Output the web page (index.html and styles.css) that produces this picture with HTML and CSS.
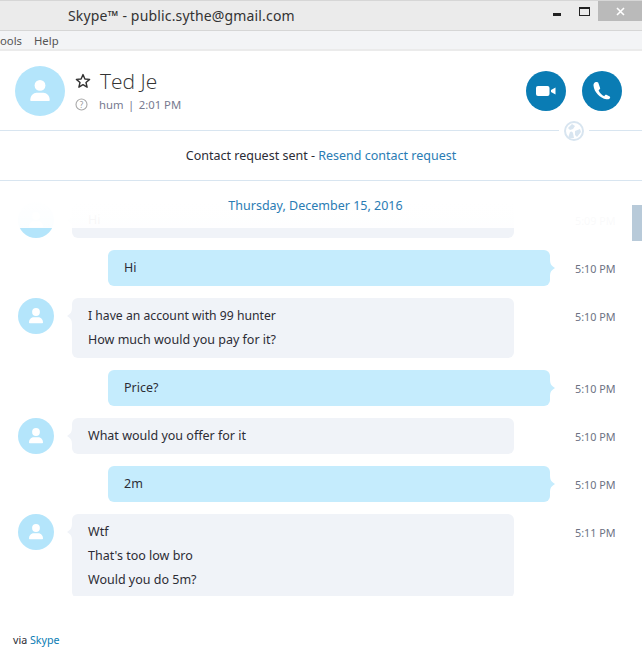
FILE: index.html
```html
<!DOCTYPE html>
<html lang="en">
<head>
<meta charset="utf-8">
<title>Skype</title>
<link rel="stylesheet" href="styles.css">
</head>
<body>
<div class="page">
  <header class="titlebar">
    <span class="title">Skype™ - public.sythe@gmail.com</span>
    <div class="winctl">
      <span class="min"></span>
      <span class="max"></span>
      <span class="close"><svg width="9" height="9" viewBox="0 0 9 9"><path d="M1 1l7 7M8 1l-7 7" stroke="#fff" stroke-width="1.6"/></svg></span>
    </div>
  </header>
  <nav class="menubar"><span class="tools">ools</span><span class="help">Help</span></nav>
  <section class="contact">
    <div class="avatar big"><svg viewBox="0 0 36 36"><use href="#person"/></svg></div>
    <div class="who">
      <div class="nameline">
        <svg class="star" width="16" height="16" viewBox="0 0 16 16"><path d="M8 1.6l1.9 4.4 4.7.4-3.6 3.1 1.1 4.7L8 11.7l-4.100 2.500 1.100-4.700-3.600-3.100 4.700-.4z" fill="none" stroke="#333" stroke-width="1.4" stroke-linejoin="round"/></svg>
        <span class="name">Ted Je</span>
      </div>
      <div class="status">
        <svg class="q" width="13" height="13" viewBox="0 0 13 13"><circle cx="6.5" cy="6.5" r="5.5" fill="none" stroke="#a9a9a9" stroke-width="1.1"/><text x="6.5" y="9.500" class="qmark">?</text></svg>
        <span>hum</span><span class="sep">|</span><span>2:01 PM</span>
      </div>
    </div>
    <div class="actions">
      <button class="call"><svg width="22" height="14" viewBox="0 0 22 14"><rect x="1" y="2" width="13.500" height="10" rx="2" fill="#fff"/><path d="M16 6l4.500-2.500v7L16 8z" fill="#fff"/></svg></button>
      <button class="call"><svg width="20" height="20" viewBox="0 0 20 20"><path d="M3.200 1.300c-1.100.7-1.800 1.700-1.700 3.200.3 3.500 2 6.600 4.300 8.900 2.400 2.500 5.200 4.200 8.600 4.900 1.900.3 3.200-.4 3.700-1.600.2-.6 0-1-.4-1.200l-3.300-1.700c-.5-.2-1-.1-1.300.3l-.8 1.100c-2.500-1-4.700-3.400-5.700-6l1.100-.9c.4-.3.600-.8.400-1.300L6.200 1.600c-.3-.7-2-.9-3-.3z" fill="#fff"/></svg></button>
    </div>
  </section>
  <section class="notice">
    <span class="globe"><svg width="20" height="20" viewBox="0 0 20 20"><circle cx="10" cy="10" r="9" fill="none" stroke="#d8e5f0" stroke-width="2"/><circle cx="10" cy="10" r="7" fill="#fff"/><path d="M4 7l4-4 3 2-2 3-3 1zM11 10l5-2 1 3-4 5-2-2zM6 11a2 2 0 0 1 3 1l1 5H4z" fill="#d8e5f0"/></svg></span>
    <span>Contact request sent - </span><a class="link">Resend contact request</a>
  </section>
  <main class="chat">
    <div class="fade"></div>
    <div class="date">Thursday, December 15, 2016</div>
    <div class="thumb"></div>
    <div class="row in">
      <div class="avatar"><svg viewBox="0 0 36 36"><use href="#person"/></svg></div>
      <div class="bubble"><p>Hi</p></div>
      <time>5:09 PM</time>
    </div>
    <div class="row out">
      <div class="bubble"><p>Hi</p></div>
      <time>5:10 PM</time>
    </div>
    <div class="row in">
      <div class="avatar"><svg viewBox="0 0 36 36"><use href="#person"/></svg></div>
      <div class="bubble"><p class="tight">I have an account with 99 hunter</p><p>How much would you pay for it?</p></div>
      <time>5:10 PM</time>
    </div>
    <div class="row out">
      <div class="bubble"><p>Price?</p></div>
      <time>5:10 PM</time>
    </div>
    <div class="row in">
      <div class="avatar"><svg viewBox="0 0 36 36"><use href="#person"/></svg></div>
      <div class="bubble"><p>What would you offer for it</p></div>
      <time>5:10 PM</time>
    </div>
    <div class="row out">
      <div class="bubble"><p>2m</p></div>
      <time>5:10 PM</time>
    </div>
    <div class="row in">
      <div class="avatar"><svg viewBox="0 0 36 36"><use href="#person"/></svg></div>
      <div class="bubble"><p>Wtf</p><p>That's too low bro</p><p>Would you do 5m?</p></div>
      <time>5:11 PM</time>
    </div>
  </main>
  <footer class="via">via <a class="skype">Skype</a></footer>
</div>
<svg class="defs" width="0" height="0"><defs><g id="person"><circle cx="18" cy="14" r="3.900" fill="#fff"/><path d="M11 24.500c0-3.200 2.300-5.300 4.500-5.300h5c2.200 0 4.500 2.100 4.500 5.300 0 .4-.3.700-.7.700H11.700c-.4 0-.7-.3-.7-.7z" fill="#fff"/></g></defs></svg>
</body>
</html>
```
FILE: styles.css
```css
* { box-sizing: border-box; }
html, body { margin: 0; padding: 0; background: #fff; }
body { font-family: "Noto Sans", "Open Sans", sans-serif; font-size: 12.5px; color: #2c2c35; }
.page { width: 642px; height: 650px; overflow: hidden; position: relative; }
.defs { position: absolute; }

.titlebar { height: 31px; background: #ebebeb; border-top: 1px solid #d6d6d6; border-bottom: 1px solid #d6d6d6; display: flex; align-items: center; padding-left: 68px; position: relative; }
.title { font-size: 14px; letter-spacing: .16px; color: #333; line-height: 28px; }
.winctl { position: absolute; top: 0; right: 0; display: flex; align-items: flex-start; }
.min { width: 8px; height: 3px; background: #222; margin-top: 12px; margin-right: 18px; }
.max { width: 11px; height: 9px; border: 1px solid #222; border-top-width: 2px; margin-top: 6px; margin-right: 8px; }
.close { width: 44px; height: 20px; background: #bababa; display: flex; align-items: center; justify-content: center; }

.menubar { height: 20px; background: #f3f4f6; border-bottom: 2px solid #ebebeb; display: flex; align-items: center; font-size: 11.300px; color: #555; overflow: hidden; }
.tools { width: 34px; }

.contact { height: 79px; display: flex; align-items: flex-start; padding: 15px 20px 0 15px; }
.avatar { width: 36px; height: 36px; border-radius: 50%; background: #b4e5fb; flex: none; }
.avatar svg { display: block; width: 100%; height: 100%; }
.avatar.big { width: 50px; height: 50px; }
.who { margin-left: 10px; flex: 1; }
.nameline { display: flex; align-items: center; height: 30px; }
.star { margin-left: 0; margin-right: 9px; flex: none; }
.name { font-family: "Open Sans", "Noto Sans", sans-serif; font-weight: 300; font-size: 21px; color: #333; }
.status { display: flex; align-items: center; font-size: 11.300px; color: #777a90; margin-top: 1px; }
.sep { margin: 0 4.500px; }
.q { margin-right: 11px; flex: none; }
.qmark { font-size: 8px; fill: #999; text-anchor: middle; }
.actions { display: flex; gap: 16px; margin-top: 5px; }
.call { width: 40px; height: 40px; border: 0; padding: 0; border-radius: 50%; background: #0a7cb4; display: flex; align-items: center; justify-content: center; }

.notice { height: 51px; border-top: 1px solid #d8e5f0; border-bottom: 1px solid #d8e5f0; display: flex; justify-content: center; align-items: center; position: relative; white-space: pre; color: #2c2c35; }
.link { color: #2a7cb4; }
.globe { position: absolute; top: -10px; left: 559px; width: 30px; height: 20px; background: #fff; display: flex; justify-content: center; }

.chat { height: 415px; overflow: hidden; position: relative; padding-top: 21px; display: flex; flex-direction: column; gap: 12px; }
.fade { position: absolute; top: 0; left: 0; right: 0; height: 47px; background: linear-gradient(rgba(255,255,255,1) 40%, rgba(255,255,255,.95)); z-index: 2; }
.date { position: absolute; top: 16px; left: 0; width: 631px; text-align: center; color: #2a7cb4; z-index: 3; }
.thumb { position: absolute; top: 24px; right: 0; width: 10px; height: 36px; background: #b8cad9; z-index: 3; }

.row { display: grid; grid-template-columns: 18px 36px 18px 36px 406px 36px 25px auto; flex: none; }
.row .avatar { grid-column: 2; }
.bubble { padding: 6px 16px; position: relative; border-radius: 6px; }
.bubble p { margin: 0; height: 24px; line-height: 24px; }
.bubble p.tight { font-size: 12.200px; }
.in .bubble { grid-column: 4 / 6; background: #f0f3f8; }
.out .bubble { grid-column: 5 / 7; background: #c5ecfd; }
.in .bubble::before { content: ""; position: absolute; left: -5px; top: 9px; width: 5px; height: 18px; background: #f0f3f8; clip-path: path("M5 0C5 6 3 7 0 9C3 11 5 12 5 18Z"); }
.out .bubble::after { content: ""; position: absolute; right: -5px; top: 9px; width: 5px; height: 18px; background: #c5ecfd; clip-path: path("M0 0C0 6 2 7 5 9C2 11 0 12 0 18Z"); }
time { font-size: 10.800px; color: #6c7283; height: 36px; padding-top: 1px; line-height: 36px; grid-column: 8; }

.via { padding: 0 0 0 13px; font-size: 10.700px; line-height: 14px; margin-top: 37px; }
.skype { color: #0a7cb4; }
```
